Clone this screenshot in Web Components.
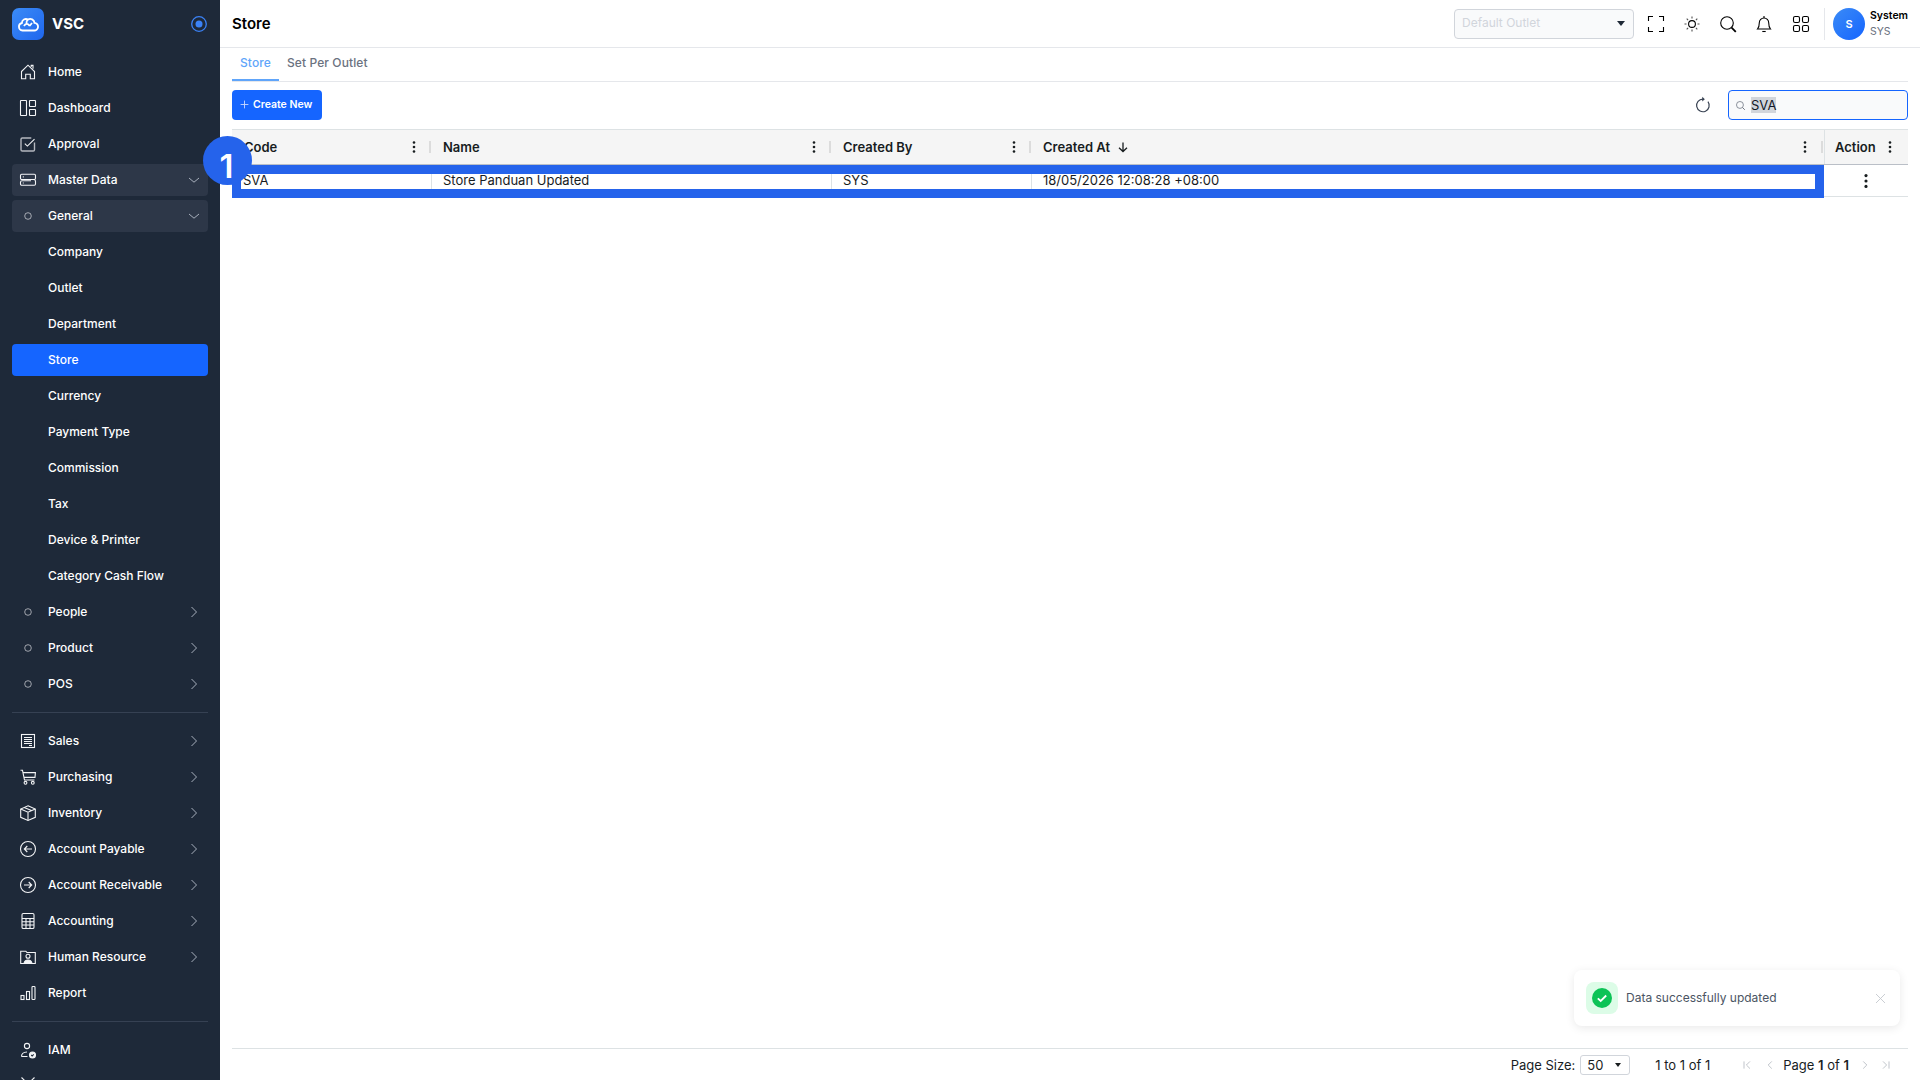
<!DOCTYPE html>
<html>
<head>
<meta charset="utf-8">
<title>Store</title>
<style>
  html, body { margin: 0; height: 100%; overflow: hidden; background: #fff; }
  body { font-family: Inter, "Liberation Sans", sans-serif; }
</style>
</head>
<body>
<app-shell>
  <side-bar slot="side">
    <nav-item icon="home">Home</nav-item>
    <nav-item icon="dashboard">Dashboard</nav-item>
    <nav-item icon="approval">Approval</nav-item>
    <nav-item icon="server" chevron="down" open>Master Data</nav-item>
    <nav-item icon="dot" chevron="down" open>General</nav-item>
    <nav-item>Company</nav-item>
    <nav-item>Outlet</nav-item>
    <nav-item>Department</nav-item>
    <nav-item active>Store</nav-item>
    <nav-item>Currency</nav-item>
    <nav-item>Payment Type</nav-item>
    <nav-item>Commission</nav-item>
    <nav-item>Tax</nav-item>
    <nav-item>Device &amp; Printer</nav-item>
    <nav-item>Category Cash Flow</nav-item>
    <nav-item icon="dot" chevron="right">People</nav-item>
    <nav-item icon="dot" chevron="right">Product</nav-item>
    <nav-item icon="dot" chevron="right">POS</nav-item>
    <nav-divider></nav-divider>
    <nav-item icon="sales" chevron="right">Sales</nav-item>
    <nav-item icon="cart" chevron="right">Purchasing</nav-item>
    <nav-item icon="box" chevron="right">Inventory</nav-item>
    <nav-item icon="arrowleft" chevron="right">Account Payable</nav-item>
    <nav-item icon="arrowright" chevron="right">Account Receivable</nav-item>
    <nav-item icon="calc" chevron="right">Accounting</nav-item>
    <nav-item icon="person" chevron="right">Human Resource</nav-item>
    <nav-item icon="report">Report</nav-item>
    <nav-divider></nav-divider>
    <nav-item icon="iam">IAM</nav-item>
    <nav-item icon="tools"></nav-item>
  </side-bar>
  <top-bar slot="top" heading="Store"></top-bar>
  <tab-strip>
    <tab-link active>Store</tab-link>
    <tab-link>Set Per Outlet</tab-link>
  </tab-strip>
  <tool-bar query="SVA"></tool-bar>
  <data-table></data-table>
  <page-footer></page-footer>
  <toast-message slot="over">Data successfully updated</toast-message>
  <step-badge slot="over">1</step-badge>
</app-shell>

<script>
const ICONS = {
  home: '<path d="M3.5 9.5 10 3.2l6.5 6.3v7.300h-4.200v-4.600H7.700v4.600H3.500z"/><path d="M13.200 5V3.400h1.800v3.300"/>',
  dashboard: '<rect x="2.500" y="2.500" width="6" height="15" rx=".5"/><rect x="11.500" y="2.500" width="6" height="6" rx=".5"/><rect x="11.500" y="11.500" width="6" height="6" rx=".5"/>',
  approval: '<path d="M16.500 8.500v7.200a1.300 1.300 0 0 1-1.300 1.300H4.300A1.300 1.300 0 0 1 3 15.700V5.300A1.300 1.300 0 0 1 4.300 4h9" stroke-opacity=".7" stroke-width="1.400"/><path d="m6.800 9.600 2.600 2.500 7.100-7"/>',
  server: '<rect x="2.500" y="4.300" width="15" height="5.200" rx="1.200"/><path d="M4 9.500h11.500a2 2 0 0 1 2 2v2.500a1.200 1.200 0 0 1-1.200 1.200H3.700A1.200 1.200 0 0 1 2.500 14v-1.800A1.500 1.500 0 0 1 4 10.700h9"/><path d="M4.800 6.900h1M4.800 13h1"/>',
  dot: '<circle cx="10" cy="10" r="3.300" stroke-opacity=".6" stroke-width="1"/>',
  sales: '<rect x="3.500" y="3.500" width="13" height="13"/><path d="M6 6.500h8M6 8.500h8M6 10.500h8M6 12.500h8M11 14.500h3"/>',
  cart: '<path d="M2.500 3.300h2l2 9.700h10"/><path d="M5 5.600h12.400l-.4 4.800H6"/><circle cx="7.500" cy="15.800" r="1.400"/><circle cx="14.800" cy="15.800" r="1.400"/>',
  box: '<path d="M10 2.800 17.300 6v8.300L10 17.500l-7.300-3.200V6z"/><path d="M2.700 6 10 9.200 17.300 6M10 9.200v8.300M6.200 4.400 13.500 7.600"/>',
  arrowleft: '<circle cx="10" cy="10" r="7.500"/><path d="M14 10H6.500M9.300 7 6.300 10l3 3"/>',
  arrowright: '<circle cx="10" cy="10" r="7.500"/><path d="M6 10h7.500M10.700 7l3 3-3 3"/>',
  calc: '<rect x="4" y="2.500" width="12" height="15" rx="1.300"/><path d="M4 7.500h12M4 10.700h12M4 14h12M8 7.500v10M12 7.500v10"/>',
  person: '<path d="M2.700 4.200h5.200l1 1.300h8.400v11H2.700z"/><circle cx="10" cy="9.200" r="2"/><path d="M6 16.400c.4-2.400 2-3.400 4-3.400s3.600 1 4 3.400" fill="currentColor"/>',
  report: '<rect x="3" y="12.500" width="3" height="4"/><rect x="8.500" y="8.500" width="3" height="8"/><rect x="14" y="3.500" width="3" height="13" rx=".8"/>',
  iam: '<circle cx="9" cy="6" r="2.600"/><path d="M3.500 16.500h6M3.500 16.500c0-2.800 1.800-4.300 5.500-4.500"/><circle cx="14.500" cy="15" r="3" fill="currentColor"/><path d="m13.200 15 1 1 1.500-1.700" stroke="#1e2939"/>',
  tools: '<path d="M3.500 1.500 16 13.500M16.500 1.500 4 13.500"/>',
  chevdown: '<path d="m1 4 5 4.200L11 4"/>',
  chevright: '<path d="m3.500 1 5 5-5 5"/>',
  full: '<path d="M2.500 7V2.500H7M13 2.500h4.500V7M17.500 13v4.500H13M7 17.500H2.500V13"/>',
  sun: '<circle cx="10" cy="10" r="3.400"/><path d="M10 2.500v2M10 15.500v2M2.500 10h2M15.500 10h2M4.700 4.700 6.100 6.100M13.900 13.900l1.400 1.400M4.700 15.300l1.400-1.400M13.900 6.100l1.400-1.400" stroke-opacity=".7"/>',
  search: '<circle cx="9" cy="9" r="6.300"/><path d="m13.600 13.600 4.200 4.200" stroke-width="1.800"/>',
  bell: '<path d="M3.500 15h13c-1.400-1.600-1.800-3-1.800-6.300a4.700 4.700 0 0 0-9.400 0c0 3.300-.4 4.700-1.800 6.300z"/><path d="M8.300 17.500h3.400"/><path d="M10 2v2"/>',
  grid: '<rect x="2.500" y="2.500" width="6" height="6" rx="1.600"/><rect x="11.500" y="2.500" width="6" height="6" rx="1.600"/><rect x="2.500" y="11.500" width="6" height="6" rx="1.600"/><rect x="11.500" y="11.500" width="6" height="6" rx="1.600"/>',
  refresh: '<path d="M15.500 6.300A7 7 0 1 1 10 3.500"/><path d="M9.200 .9 12 3.500 9.200 6.100" fill="currentColor" stroke="none"/>',
  plus: '<path d="M10 4v12M4 10h12"/>',
  close: '<path d="m4 4 12 12M16 4 4 16"/>',
  first: '<path d="M5 4v12M15 4 9 10l6 6"/>',
  prev: '<path d="M13 4 7 10l6 6"/>',
  next: '<path d="m7 4 6 6-6 6"/>',
  last: '<path d="M15 4v12M5 4l6 6-6 6"/>'
}

const icon = (name, size = 20, width = 1.1, box = 20) =>
  `<svg width="${size}" height="${size}" viewBox="0 0 ${box} ${box}" fill="none" stroke="currentColor" stroke-width="${width}">${ICONS[name]}</svg>`

// the three dots used in the grid header and the action cell
const dots = `<svg width="4" height="14" viewBox="0 0 4 14" fill="currentColor"><circle cx="2" cy="2.500" r="1.300"/><circle cx="2" cy="7" r="1.300"/><circle cx="2" cy="11.500" r="1.300"/></svg>`

class AppShell extends HTMLElement {
  constructor() {
    super()
    this.attachShadow({ mode: 'open' }).innerHTML = `
      <style>
        :host { display: flex; width: 1920px; height: 1080px; position: relative; overflow: hidden; color: #181d1f; }
        .main { flex: 1; min-width: 0; display: flex; flex-direction: column; }
        .content { flex: 1; min-height: 0; display: flex; flex-direction: column; padding: 0 12px; }
      </style>
      <slot name="side"></slot>
      <div class="main">
        <slot name="top"></slot>
        <div class="content"><slot></slot></div>
      </div>
      <slot name="over"></slot>`
  }
}

class SideBar extends HTMLElement {
  constructor() {
    super()
    this.attachShadow({ mode: 'open' }).innerHTML = `
      <style>
        :host { display: block; width: 220px; height: 1080px; flex: none; background: #1e2939; overflow: hidden; color: #fff; }
        .brand { height: 48px; box-sizing: border-box; display: flex; align-items: flex-start; padding: 8px 13px 0 12px; }
        .logo { width: 32px; height: 32px; border-radius: 7px; background: linear-gradient(135deg, #3b8bf6, #1f66ee); display: flex; align-items: center; justify-content: center; }
        .name { margin-left: 8px; font-size: 15px; line-height: 32px; font-weight: 700; flex: 1; }
        .target { margin-top: 8px; }
        nav { display: flex; flex-direction: column; gap: 4px; padding: 8px 12px 0; }
      </style>
      <div class="brand">
        <div class="logo">
          <svg width="24" height="24" viewBox="0 0 24 24" fill="none" stroke="#fff" stroke-width="1.800">
            <path d="M6.500 18.500a3.800 3.800 0 0 1-.6-7.500 4 4 0 0 1 6-3.400 4.300 4.300 0 0 1 6.600 3.300 3.800 3.800 0 0 1-.5 7.600z"/>
            <path d="M8 14c1.500-3 4.500-2.500 5.500 0M11.800 7.600c-1 1-1.500 2-1.300 3.700M13.500 14l2.500-3"/>
          </svg>
        </div>
        <span class="name">VSC</span>
        <svg class="target" width="16" height="16" viewBox="0 0 16 16"><circle cx="8" cy="8" r="7.300" fill="none" stroke="#3b82f6" stroke-width="1.300"/><circle cx="8" cy="8" r="3.500" fill="#3b82f6"/></svg>
      </div>
      <nav><slot></slot></nav>`
  }
}

class NavItem extends HTMLElement {
  constructor() {
    super()
    const name = this.getAttribute('icon')
    const chev = this.getAttribute('chevron')
    this.attachShadow({ mode: 'open' }).innerHTML = `
      <style>
        :host { display: flex; align-items: center; height: 32px; flex: none; border-radius: 4px; padding: 0 8px 0 6px; font-size: 12px; font-weight: 500; color: #fff; }
        :host([open]) { background: #2d3748; }
        :host([active]) { background: #1565ff; }
        .icon { width: 20px; height: 20px; margin-right: 10px; flex: none; color: #f3f4f6; }
        .icon svg, .chev svg { display: block; }
        .label { flex: 1; white-space: nowrap; padding-bottom: 2px; }
        .chev { width: 12px; height: 12px; flex: none; color: #a8b0bd; }
      </style>
      <span class="icon">${name ? icon(name) : ''}</span>
      <span class="label"><slot></slot></span>
      <span class="chev">${chev ? icon(chev === 'down' ? 'chevdown' : 'chevright', 12, 1, 12) : ''}</span>`
  }
}

class NavDivider extends HTMLElement {
  constructor() {
    super()
    this.attachShadow({ mode: 'open' }).innerHTML = `
      <style>:host { display: block; height: 1px; background: #364153; margin: 8px 0; }</style>`
  }
}

class TopBar extends HTMLElement {
  constructor() {
    super()
    this.attachShadow({ mode: 'open' }).innerHTML = `
      <style>
        :host { display: flex; align-items: center; height: 47px; flex: none; padding: 0 12px; border-bottom: 1px solid #e5e7eb; color: #000; }
        h1 { flex: 1; margin: 0; font-size: 15px; font-weight: 600; }
        .outlet { width: 180px; height: 30px; box-sizing: border-box; border: 1px solid #d1d5db; border-radius: 4px; background: #f9fafb; padding: 0 8px 0 7px; display: flex; align-items: center; justify-content: space-between; font-size: 12px; color: #d1d5db; }
        .outlet span { padding-bottom: 2px; }
        .caret { width: 0; height: 0; border: 4px solid transparent; border-top: 5px solid #1f2937; border-bottom: 0; }
        .icons { display: flex; gap: 16px; margin-left: 12px; align-items: center; }
        .icons svg { display: block; }
        .icons svg:last-child { margin-left: 1px; }
        .sep { width: 1px; height: 32px; background: #e5e7eb; margin: 0 8px 0 13px; }
        .avatar { width: 32px; height: 32px; border-radius: 50%; background: linear-gradient(135deg, #3b8bf6, #1565ff); color: #fff; font-size: 11px; font-weight: 600; display: flex; align-items: center; justify-content: center; }
        .user { margin-left: 5px; font-size: 10.5px; line-height: 16px; width: 38px; white-space: nowrap; }
        .user b { display: block; font-weight: 600; }
        .user span { color: #6b7280; }
      </style>
      <h1>${this.getAttribute('heading')}</h1>
      <div class="outlet"><span>Default Outlet</span><i class="caret"></i></div>
      <div class="icons">${['full', 'sun', 'search', 'bell', 'grid'].map((n) => icon(n)).join('')}</div>
      <div class="sep"></div>
      <div class="avatar">S</div>
      <div class="user"><b>System</b><span>SYS</span></div>`
  }
}

class TabStrip extends HTMLElement {
  constructor() {
    super()
    this.attachShadow({ mode: 'open' }).innerHTML = `
      <style>:host { display: flex; height: 33px; flex: none; border-bottom: 1px solid #e5e7eb; }</style>
      <slot></slot>`
  }
}

class TabLink extends HTMLElement {
  constructor() {
    super()
    this.attachShadow({ mode: 'open' }).innerHTML = `
      <style>
        :host { display: flex; align-items: center; height: 33px; box-sizing: border-box; padding: 0 8px 2px; font-size: 12px; letter-spacing: .1px; font-weight: 500; color: #6b7280; border-bottom: 2px solid transparent; }
        :host([active]) { color: #60a5fa; border-bottom-color: #60a5fa; }
      </style>
      <slot></slot>`
  }
}

class ToolBar extends HTMLElement {
  constructor() {
    super()
    this.attachShadow({ mode: 'open' }).innerHTML = `
      <style>
        :host { display: flex; align-items: center; height: 30px; flex: none; margin: 8px 0 9px; }
        button { height: 30px; width: 90px; padding: 0 0 1px 6px; border: 0; border-radius: 4px; background: #1565ff; color: #fff; font: 600 10.5px Inter, sans-serif; display: flex; align-items: center; gap: 2px; }
        button svg { color: #c7d7fe; }
        .gap { flex: 1; }
        .refresh { color: #374151; margin-right: 16px; }
        .refresh svg { display: block; }
        .search { width: 180px; height: 30px; box-sizing: border-box; border: 1px solid #1565ff; border-radius: 4px; background: #f9fafb; display: flex; align-items: center; padding-left: 6px; gap: 5px; font-size: 13px; color: #111827; }
        .search svg { color: #6b7280; }
        mark { background: #d1d5db; color: inherit; }
      </style>
      <button>${icon('plus', 13, 1.400)}Create New</button>
      <span class="gap"></span>
      <span class="refresh">${icon('refresh', 18, 1.300)}</span>
      <div class="search">${icon('search', 11, 1.400)}<mark>${this.getAttribute('query')}</mark></div>`
  }
}

class DataTable extends HTMLElement {
  constructor() {
    super()
    const columns = [
      ['Code', 200, 'SVA'],
      ['Name', 400, 'Store Panduan Updated'],
      ['Created By', 200, 'SYS'],
      ['Created At', 792, '18/05/2026 12:08:28 +08:00']
    ]
    const head = columns.map(([title, w], i) => `
      <div class="th" style="width:${w}px">
        <span class="title">${title}${i === 3 ? '<svg class="sort" width="12" height="12" viewBox="0 0 12 12" fill="none" stroke="currentColor" stroke-width="1.300"><path d="M6 1.500v9M2 6.800l4 3.700 4-3.700"/></svg>' : ''}</span>
        ${dots}<i class="grip"></i>
      </div>`).join('')
    const cells = columns.map(([, w, text], i) => {
      const width = i === 0 || i === 3 ? w - 9 : w
      return `<div class="td" style="width:${width}px">${text}</div>`
    }).join('')
    this.attachShadow({ mode: 'open' }).innerHTML = `
      <style>
        :host { display: block; flex: 1; min-height: 0; font-size: 13px; color: #181d1f; }
        .head, .body { display: flex; }
        .head { height: 36px; box-sizing: border-box; background: #f5f5f5; border-top: 1px solid #dde2e4; border-bottom: 1px solid #babfc7; }
        .th { box-sizing: border-box; padding: 0 1px 0 11px; display: flex; align-items: center; font-weight: 600; flex: none; }
        .th:first-child { padding-left: 12px; }
        .th svg { flex: none; }
        .title { flex: 1; display: flex; align-items: center; gap: 7px; }
        .grip { width: 2px; height: 12px; background: #dcdcdc; margin-left: 13px; }
        .th:nth-child(4) .grip { margin-left: 14px; }
        .action { flex: 1; padding: 0 0 0 10px; border-left: 1px solid #dde2e4; display: flex; align-items: center; font-weight: 600; }
        .action span { flex: 1; }
        .action svg { margin-right: 16px; }
        .selected { display: flex; width: 1592px; height: 33px; box-sizing: border-box; border: 9px solid #2563eb; background: #fff; flex: none; }
        .td { box-sizing: border-box; height: 15px; padding-left: 11px; line-height: 13px; white-space: nowrap; border-right: 1px solid #dde2e4; flex: none; }
        .td:first-child { padding-left: 2px; }
        .td:last-child { border-right: 0; }
        .cell-action { flex: 1; height: 32px; box-sizing: border-box; padding-top: 1px; border-bottom: 1px solid #dde2e4; display: flex; align-items: center; justify-content: center; }
        .cell-action svg { transform: scale(1.2); }
      </style>
      <div class="head">${head}<div class="action"><span>Action</span>${dots}</div></div>
      <div class="body">
        <div class="selected">${cells}</div>
        <div class="cell-action">${dots}</div>
      </div>`
  }
}

class PageFooter extends HTMLElement {
  constructor() {
    super()
    this.attachShadow({ mode: 'open' }).innerHTML = `
      <style>
        :host { display: flex; align-items: center; justify-content: flex-end; height: 32px; box-sizing: border-box; flex: none; border-top: 1px solid #dde2e4; font-size: 13px; color: #181d1f; padding-right: 16px; }
        .size { width: 50px; height: 20px; box-sizing: border-box; margin: 0 25px 0 5px; border: 1px solid #d1d5db; border-radius: 3px; display: flex; align-items: center; justify-content: space-between; padding: 0 8px 0 6px; }
        .caret { width: 0; height: 0; border: 3.500px solid transparent; border-top: 4px solid #181d1f; border-bottom: 0; }
        .nav { color: #a8aeb6; display: block; }
        .nav svg { display: block; }
        b { font-weight: 600; }
      </style>
      <span>Page Size:</span>
      <div class="size"><span>50</span><i class="caret"></i></div>
      <span>1 to 1 of 1</span>
      <span class="nav" style="margin-left:31px">${icon('first', 12, 1.200)}</span>
      <span class="nav" style="margin-left:11px">${icon('prev', 12, 1.200)}</span>
      <span style="margin:0 10px 0 7px">Page <b>1</b> of <b>1</b></span>
      <span class="nav">${icon('next', 12, 1.200)}</span>
      <span class="nav" style="margin-left:9px">${icon('last', 12, 1.200)}</span>`
  }
}

class ToastMessage extends HTMLElement {
  constructor() {
    super()
    this.attachShadow({ mode: 'open' }).innerHTML = `
      <style>
        :host { position: absolute; left: 1574px; top: 970px; width: 326px; height: 56px; box-sizing: border-box; padding: 0 12px; display: flex; align-items: center; background: #fff; border-radius: 8px; box-shadow: 0 2px 10px rgba(0, 0, 0, 0.09); font-size: 12px; color: #4b5563; }
        .mark { width: 32px; height: 32px; border-radius: 8px; background: #dcfce7; display: flex; align-items: center; justify-content: center; margin-right: 8px; }
        .text { flex: 1; padding-bottom: 2px; }
        .x { color: #c4c8ce; }
        .x svg { display: block; }
      </style>
      <div class="mark">
        <svg width="20" height="20" viewBox="0 0 20 20"><circle cx="10" cy="10" r="10" fill="#0cc356"/><path d="m5.800 10.300 2.900 2.700 5.500-5.500" fill="none" stroke="#fff" stroke-width="1.800"/></svg>
      </div>
      <span class="text"><slot></slot></span>
      <span class="x">${icon('close', 15, 1.200)}</span>`
  }
}

class StepBadge extends HTMLElement {
  constructor() {
    super()
    this.attachShadow({ mode: 'open' }).innerHTML = `
      <style>
        :host { position: absolute; left: 203px; top: 136px; width: 49px; height: 49px; box-sizing: border-box; padding: 11px 2px 0 0; border-radius: 50%; background: #2563eb; color: #fff; display: flex; align-items: center; justify-content: center; font: 600 33px Inter, sans-serif; }
      </style>
      <slot></slot>`
  }
}

customElements.define('app-shell', AppShell)
customElements.define('side-bar', SideBar)
customElements.define('nav-item', NavItem)
customElements.define('nav-divider', NavDivider)
customElements.define('top-bar', TopBar)
customElements.define('tab-strip', TabStrip)
customElements.define('tab-link', TabLink)
customElements.define('tool-bar', ToolBar)
customElements.define('data-table', DataTable)
customElements.define('page-footer', PageFooter)
customElements.define('toast-message', ToastMessage)
customElements.define('step-badge', StepBadge)
</script>
</body>
</html>
